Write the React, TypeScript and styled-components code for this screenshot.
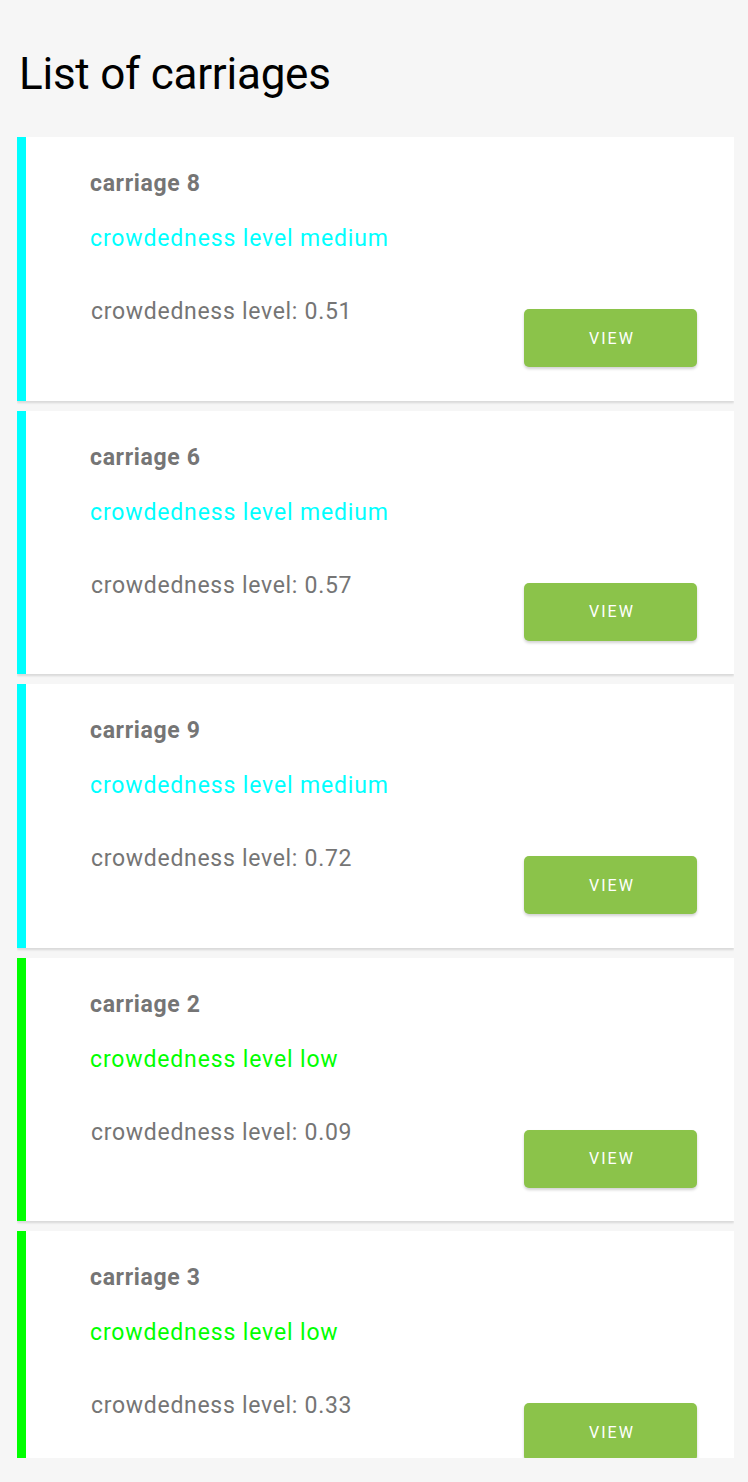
import React from "react";
import styled, { createGlobalStyle } from "styled-components";

const Global = createGlobalStyle`
  html, body { margin: 0; padding: 0; background: #f6f6f6; }
  body { font-family: Roboto, "Noto Sans", sans-serif; }
`;

const Page = styled.div`
  height: 1482px;
  display: flex;
  flex-direction: column;
  padding: 0 14px 24px 17px;
  box-sizing: border-box;
`;

const Title = styled.h1`
  margin: 0;
  padding: 46px 0 35px 2px;
  font-size: 44px;
  line-height: 56px;
  font-weight: 400;
  letter-spacing: -0.25px;
  color: #000;
`;

const List = styled.div`
  flex: 1;
  overflow: hidden;
  display: flex;
  flex-direction: column;
  gap: 10px;
  padding-bottom: 4px;
`;

const Card = styled.div<{ $accent: string }>`
  flex: none;
  height: 263.5px;
  background: #fff;
  border-left: 9px solid ${(p) => p.$accent};
  box-shadow: 0 2px 2px rgba(0, 0, 0, 0.12);
  display: grid;
  grid-template-columns: 1fr auto;
  padding: 31px 37px 0 64px;
  box-sizing: border-box;
`;

const Info = styled.div`
  display: flex;
  flex-direction: column;
`;

const Name = styled.div`
  font-size: 23px;
  line-height: 32px;
  font-weight: 700;
  letter-spacing: 0.65px;
  color: #757575;
`;

const Level = styled.div<{ $color: string }>`
  margin-top: 23px;
  font-size: 23px;
  line-height: 32px;
  letter-spacing: 0.85px;
  color: ${(p) => p.$color};
`;

const Value = styled.div`
  margin-top: 41px;
  margin-left: 1px;
  font-size: 23px;
  line-height: 32px;
  letter-spacing: 0.7px;
  color: #757575;
`;

const Button = styled.button`
  align-self: start;
  margin-top: 141px;
  width: 173px;
  height: 58px;
  border: none;
  border-radius: 5px;
  background: #8bc34a;
  color: #fff;
  font-family: Roboto, sans-serif;
  font-size: 16px;
  font-weight: 400;
  letter-spacing: 2px;
  text-indent: 3px;
  text-transform: uppercase;
  box-shadow: 0 2px 3px rgba(0, 0, 0, 0.18);
  cursor: pointer;
`;

const carriages = [
  { name: "carriage 8", level: "medium", value: "0.51" },
  { name: "carriage 6", level: "medium", value: "0.57" },
  { name: "carriage 9", level: "medium", value: "0.72" },
  { name: "carriage 2", level: "low", value: "0.09" },
  { name: "carriage 3", level: "low", value: "0.33" },
];

const colors: Record<string, string> = { medium: "#00ffff", low: "#00ff00" };

export default function App() {
  return (
    <>
      <Global />
      <Page>
        <Title>List of carriages</Title>
        <List>
          {carriages.map((c) => (
            <Card key={c.name} $accent={colors[c.level]}>
              <Info>
                <Name>{c.name}</Name>
                <Level $color={colors[c.level]}>crowdedness level {c.level}</Level>
                <Value>crowdedness level: {c.value}</Value>
              </Info>
              <Button>View</Button>
            </Card>
          ))}
        </List>
      </Page>
    </>
  );
}
